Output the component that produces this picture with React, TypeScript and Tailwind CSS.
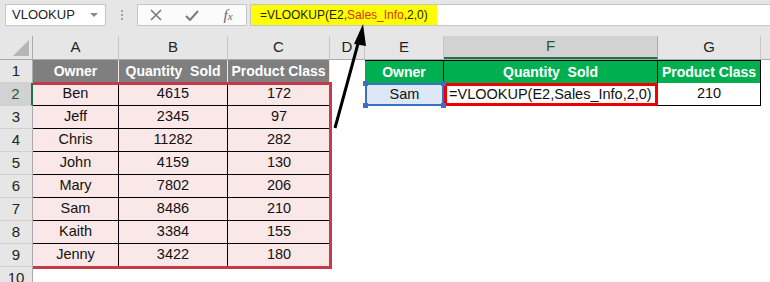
import React from "react";

const rows: [string, number, number][] = [
  ["Ben", 4615, 172],
  ["Jeff", 2345, 97],
  ["Chris", 11282, 282],
  ["John", 4159, 130],
  ["Mary", 7802, 206],
  ["Sam", 8486, 210],
  ["Kaith", 3384, 155],
  ["Jenny", 3422, 180],
];

const letters = ["A", "B", "C", "D", "E", "F", "G"];
const widths = ["w-[86px]", "w-[109px]", "w-[102px]", "w-[35px]", "w-[79px]", "w-[214px]", "w-[103px]"];

function TopBar() {
  return (
    <div className="h-[36px] bg-[#e6e6e6] flex items-start pt-[4px] pl-[5px]">
      <div className="w-[101px] h-[22px] bg-white border border-[#c6c6c6] flex items-center justify-between pl-[6px] pr-[7px]">
        <span className="text-[13px] text-[#222]">VLOOKUP</span>
        <svg width="8" height="5" viewBox="0 0 8 5">
          <path d="M0 0 L8 0 L4 4 Z" fill="#8a8a8a" />
        </svg>
      </div>
      <div className="w-[31px] h-[22px] flex flex-col items-center justify-center gap-[2px]">
        <span className="w-[2px] h-[2px] bg-[#a0a0a0]" />
        <span className="w-[2px] h-[2px] bg-[#a0a0a0]" />
        <span className="w-[2px] h-[2px] bg-[#a0a0a0]" />
      </div>
      <div className="w-[110px] h-[22px] bg-[#fbfbfb] border border-[#c6c6c6] flex items-center">
        <div className="w-[36px] flex justify-center">
          <svg width="12" height="12" viewBox="0 0 12 12">
            <path d="M1 1 L11 11 M11 1 L1 11" stroke="#7a7a7a" strokeWidth="1.6" />
          </svg>
        </div>
        <div className="w-[36px] flex justify-center">
          <svg width="14" height="11" viewBox="0 0 14 11">
            <path d="M1 6 L5 10 L13 1" stroke="#7a7a7a" strokeWidth="2" fill="none" />
          </svg>
        </div>
        <div className="w-[36px] flex justify-center">
          <span className="font-['Liberation_Serif',serif] italic text-[15px] text-[#666] leading-none">
            f<span className="text-[11px]">x</span>
          </span>
        </div>
      </div>
      <div className="ml-[3px] flex-1 h-[22px] bg-white border border-[#c6c6c6] border-r-0 flex items-center">
        <div className="h-[20px] w-[186px] bg-[#ffff00] flex items-center pl-[9px] text-[12px] text-[#222]">
          =VLOOKUP(E2,<span className="text-[#d9301a]">Sales_Info</span>,2,0)
        </div>
      </div>
    </div>
  );
}

function ColumnHeader() {
  return (
    <div className="flex h-[24px] bg-[#e6e6e6] border-b border-[#ababab]">
      <div className="w-[33px] border-r border-[#ababab] flex items-end justify-end p-[3px]">
        <svg width="16" height="16" viewBox="0 0 16 16">
          <path d="M0 16 L16 0 L16 16 Z" fill="#b5b5b5" />
        </svg>
      </div>
      {letters.map((l, i) => (
        <div
          key={l}
          className={`${widths[i]} flex items-center justify-center text-[15px] border-r ${
            l === "F"
              ? "bg-[#d2d2d2] text-[#1e5c38] border-b-2 border-b-[#217346] border-r-[#ababab]"
              : "text-[#222] border-[#c6c6c6]"
          }`}
        >
          {l}
        </div>
      ))}
      <div className="flex-1" />
    </div>
  );
}

function RowHead({ n, active }: { n: number; active?: boolean }) {
  return (
    <div
      className={`w-[33px] h-full flex items-center justify-center text-[15px] border-b border-[#d0d0d0] ${
        active
          ? "bg-[#d2d2d2] text-[#1e5c38] border-r-2 border-r-[#217346]"
          : "bg-[#e6e6e6] text-[#222] border-r border-r-[#ababab]"
      }`}
    >
      {n}
    </div>
  );
}

export default function App() {
  return (
    <div className="w-[770px] h-[282px] overflow-hidden bg-white font-['Liberation_Sans',Arial,sans-serif] relative">
      <TopBar />
      <ColumnHeader />
      <div className="relative">
        <div className="flex h-[23px]">
          <RowHead n={1} />
          {["Owner", "Quantity\u00a0 Sold", "Product Class"].map((t, i) => (
            <div
              key={t}
              className={`${widths[i]} bg-[#7f7f7f] text-white font-bold text-[14px] flex items-center justify-center border-r border-[#e8e8e8]`}
            >
              {t}
            </div>
          ))}
          <div className="w-[35px]" />
          {["Owner", "Quantity\u00a0 Sold", "Product Class"].map((t, i) => (
            <div
              key={"g" + t}
              className={`${widths[i + 4]} bg-[#00b050] text-white font-bold text-[14px] flex items-center justify-center border-r border-t border-black`}
            >
              {t}
            </div>
          ))}
        </div>
        {rows.map((r, idx) => (
          <div key={r[0]} className="flex h-[23px]">
            <RowHead n={idx + 2} active={idx === 0} />
            {r.map((v, i) => (
              <div
                key={i}
                className={`${widths[i]} bg-[#fae8e8] text-[14.5px] text-[#111] flex items-center justify-center border-b border-black ${
                  i < 2 ? "border-r" : ""
                }`}
              >
                {v}
              </div>
            ))}
            {idx === 0 && (
              <>
                <div className="w-[35px]" />
                <div className="w-[79px] relative bg-[#dde7f5] border-2 border-[#3a6fc4] text-[14.5px] text-[#111] flex items-center justify-center">
                  Sam
                  <span className="absolute -left-[4px] -top-[4px] w-[5px] h-[5px] bg-[#3a6fc4]" />
                  <span className="absolute -right-[4px] -top-[4px] w-[5px] h-[5px] bg-[#3a6fc4]" />
                  <span className="absolute -left-[4px] -bottom-[4px] w-[5px] h-[5px] bg-[#3a6fc4]" />
                  <span className="absolute -right-[4px] -bottom-[4px] w-[5px] h-[5px] bg-[#3a6fc4]" />
                </div>
                <div className="w-[214px] bg-white border-[3px] border-[#f00000] text-[14.5px] text-[#111] flex items-center pl-[2px]">
                  =VLOOKUP(E2,Sales_Info,2,0)
                </div>
                <div className="w-[103px] bg-white border-r border-b border-black text-[14.5px] text-[#111] flex items-center justify-center">
                  210
                </div>
              </>
            )}
          </div>
        ))}
        <div className="flex h-[23px]">
          <RowHead n={10} />
        </div>
        <div className="absolute left-[33px] top-[22px] w-[299px] h-[187px] border-[3px] border-l-0 border-[#c43c4a] pointer-events-none" />
      </div>
      <svg className="absolute left-0 top-0 pointer-events-none" width="770" height="282">
        <line x1="335" y1="128" x2="359" y2="40" stroke="#000" strokeWidth="3" />
        <path d="M363 24 L354 44 L366 46 Z" fill="#000" />
      </svg>
    </div>
  );
}
